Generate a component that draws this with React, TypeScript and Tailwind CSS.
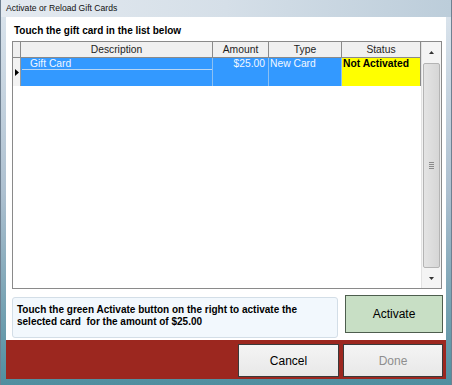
import React from 'react';

const columns = [
  { name: 'Description', w: 'w-[192px]' },
  { name: 'Amount', w: 'w-[56px]' },
  { name: 'Type', w: 'w-[73px]' },
  { name: 'Status', w: 'w-[79px]' },
];

const Arrow = ({ down }: { down?: boolean }) => (
  <svg width="5" height="3" viewBox="0 0 5 3" className="block">
    <polygon points={down ? '0,0 5,0 2.5,3' : '0,3 5,3 2.5,0'} fill="#333" />
  </svg>
);

const GiftCardGrid: React.FC = () => (
  <div className="ml-[6px] w-[430px] h-[248px] border border-[#8a8a8a] flex bg-white">
    {/* table */}
    <div className="w-[408px] flex flex-col">
      {/* header row */}
      <div className="flex h-[16px] border-b border-[#8a8a8a] bg-[#f0f0f0] text-[10.3px] leading-[15px] text-[#1e1e1e]">
        <div className="w-[8px] border-r border-[#8a8a8a]" />
        {columns.map((c) => (
          <div key={c.name} className={`${c.w} text-center border-r border-[#8a8a8a]`}>
            {c.name}
          </div>
        ))}
      </div>

      {/* selected row */}
      <div className="flex h-[28px] text-[10.3px] leading-[12px] text-[#f2f7ff]">
        <div className="w-[8px] border-r border-[#9a9a9a] bg-[#f3f3f3] flex items-center justify-center">
          <svg width="4" height="7" viewBox="0 0 4 7" className="block">
            <polygon points="0,0 4,3.5 0,7" fill="#000" />
          </svg>
        </div>
        <div className="w-[192px] bg-[#3399ff] border-r border-[#8cc0f2] flex flex-col">
          <div className="h-[12px] border-b border-[#b9d6f4] pl-[8px] ml-[1px]">Gift Card</div>
        </div>
        <div className="w-[56px] bg-[#3399ff] border-r border-[#8cc0f2] text-right pr-[3px]">$25.00</div>
        <div className="w-[73px] bg-[#3399ff] border-r border-[#8cc0f2] pl-[1px]">New Card</div>
        <div className="w-[79px] bg-[#ffff00] border-r border-[#8a8a8a] pl-[1px] font-bold text-black">
          Not Activated
        </div>
      </div>
    </div>

    {/* vertical scrollbar */}
    <div className="w-[20px] flex flex-col bg-[#f4f4f4] border-l border-[#e2e2e2]">
      <div className="h-[21px] flex items-center justify-center">
        <Arrow />
      </div>
      <div className="h-[205px] mx-[1px] rounded-[2px] border border-[#b4b4b4] bg-gradient-to-r from-[#e4e4e4] to-[#d6d6d6] flex flex-col items-center justify-center gap-[1px]">
        <div className="w-[5px] h-[1px] bg-[#8a8a8a]" />
        <div className="w-[5px] h-[1px] bg-[#8a8a8a]" />
        <div className="w-[5px] h-[1px] bg-[#8a8a8a]" />
        <div className="w-[5px] h-[1px] bg-[#8a8a8a]" />
      </div>
      <div className="h-[20px] flex items-center justify-center">
        <Arrow down />
      </div>
    </div>
  </div>
);

export default function App() {
  return (
    <div className="w-[452px] h-[385px] flex flex-col bg-gradient-to-b from-[#dde6ee] via-[#adc0d0] to-[#4f8e9f] border-x border-[#6f8091] font-['Liberation_Sans',Arial,sans-serif]">
      {/* title bar */}
      <div className="h-[17px] flex items-center pl-[5px] text-[8.6px] leading-[17px] text-[#111] bg-gradient-to-r from-[#e4eaf0] via-[#d5dfe8] to-[#bccdda]">
        Activate or Reload Gift Cards
      </div>

      <div className="flex px-[5px]">
        {/* client area */}
        <div className="w-[440px] h-[362px] bg-white flex flex-col">
          <div className="pt-[7px] pl-[8px] h-[21px] text-[10px] leading-[14px] font-bold text-black">
            Touch the gift card in the list below
          </div>
          <div className="mt-[3px]">
            <GiftCardGrid />
          </div>

          {/* instructions + activate */}
          <div className="mt-[6px] h-[43px] flex items-start pl-[6px]">
            <div className="mt-[2px] w-[326px] h-[41px] rounded-[3px] border border-[#d3dee7] bg-[#f2f8fd] pt-[6px] pl-[4px] text-[10px] leading-[12px] font-bold text-black">
              Touch the green Activate button on the right to activate the
              <br />
              selected card&nbsp; for the amount of $25.00
            </div>
            <button className="ml-[7px] w-[98px] h-[38px] border border-[#4e5e4e] bg-[#c8dfc5] text-[12px] text-black">
              Activate
            </button>
          </div>

          {/* footer bar */}
          <div className="mt-[2px] h-[39px] bg-[#9c271f] flex justify-end items-start pt-[4px] pr-[3px] gap-[4px]">
            <button className="w-[101px] h-[33px] border border-[#3a3a3a] bg-gradient-to-b from-[#f4f4f4] to-[#e8e8e8] text-[12px] text-black">
              Cancel
            </button>
            <button className="w-[100px] h-[33px] border border-[#3a3a3a] bg-gradient-to-b from-[#f4f4f4] to-[#e8e8e8] text-[12px] text-[#8e8e8e]">
              Done
            </button>
          </div>
        </div>
      </div>
    </div>
  );
}
